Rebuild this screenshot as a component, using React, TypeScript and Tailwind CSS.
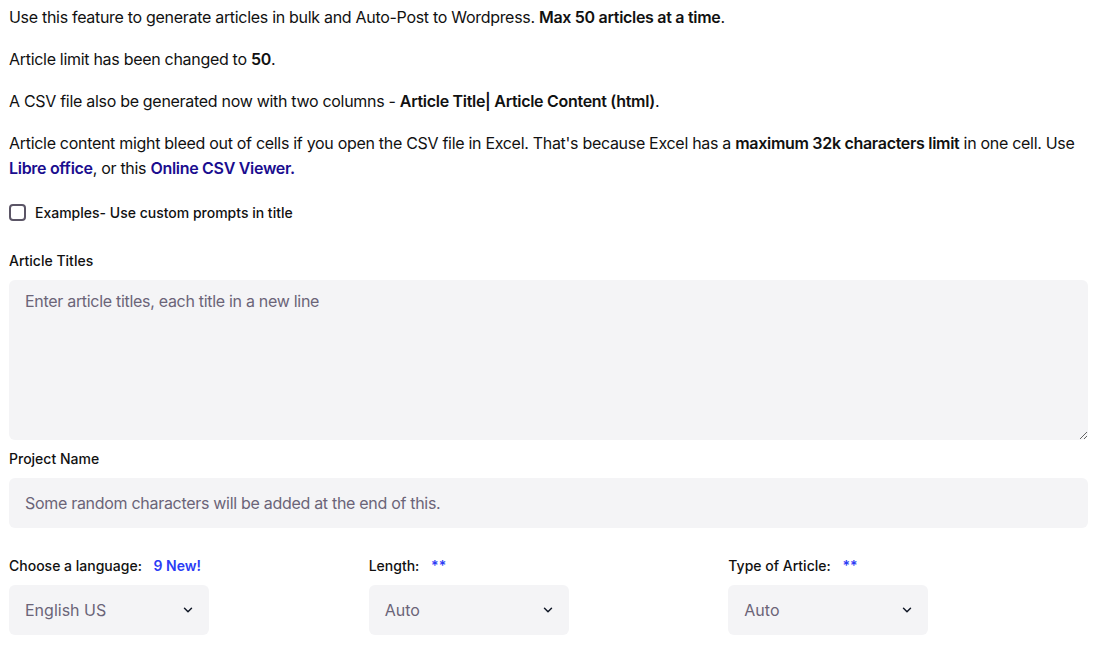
import React from "react";

const Chevron = () => (
  <svg width="14" height="14" viewBox="0 0 24 24" fill="none" stroke="#111827" strokeWidth="2.5" strokeLinecap="round" strokeLinejoin="round"><path d="M6 9l6 6 6-6" /></svg>
);

function Sel({ v }: { v: string }) {
  return (
    <div className="w-[200px] h-[50px] bg-[#f4f4f6] rounded-md flex items-center justify-between pl-4 pr-[14px] text-[16px] text-[#6b6478]">
      <span>{v}</span>
      <Chevron />
    </div>
  );
}

export default function App() {
  return (
    <div className="pl-[9px] pr-[15px] pt-[5px] text-[16px] leading-[25px] text-[#111] bg-white tracking-[-0.3px]" style={{ fontFamily: "Inter, 'Noto Sans', sans-serif" }}>
      <p className="mb-[17px]">Use this feature to generate articles in bulk and Auto-Post to Wordpress. <b className="font-semibold">Max 50 articles at a time</b>.</p>
      <p className="mb-[17px]">Article limit has been changed to <b className="font-semibold">50</b>.</p>
      <p className="mb-[17px]">A CSV file also be generated now with two columns - <b className="font-semibold">Article Title| Article Content (html)</b>.</p>
      <p className="mb-[20px]">Article content might bleed out of cells if you open the CSV file in Excel. That's because Excel has a <b className="font-semibold">maximum 32k characters limit</b> in one cell. Use <b className="font-semibold text-[#1a0d8f]">Libre office</b>, or this <b className="font-semibold text-[#1a0d8f]">Online CSV Viewer.</b></p>
      <label className="flex items-center gap-[9px] text-[14px] font-medium h-[22px] tracking-normal">
        <span className="w-[17px] h-[17px] border-2 border-[#5b5566] rounded-[4px]" />
        Examples- Use custom prompts in title
      </label>
      <div className="mt-[28px] text-[14px] font-medium leading-[20px] tracking-normal">Article Titles</div>
      <textarea className="mt-[9px] block w-full h-[160px] bg-[#f4f4f6] rounded-md px-4 py-[9px] text-[16px] placeholder-[#6b6478] outline-none" placeholder="Enter article titles, each title in a new line" />
      <div className="mt-[9px] text-[14px] font-medium leading-[20px] tracking-normal">Project Name</div>
      <div className="mt-[9px] h-[50px] bg-[#f4f4f6] rounded-md flex items-center px-4 text-[#6b6478]">Some random characters will be added at the end of this.</div>
      <div className="mt-[28px] grid grid-cols-3 tracking-normal">
        <div>
          <div className="text-[14px] font-medium leading-[20px] mb-[9px]">Choose a language: <span className="ml-2 text-[#2b3cf5] font-semibold">9 New!</span></div>
          <Sel v="English US" />
        </div>
        <div>
          <div className="text-[14px] font-medium leading-[20px] mb-[9px]">Length: <span className="ml-2 text-[#2b3cf5] font-semibold">**</span></div>
          <Sel v="Auto" />
        </div>
        <div>
          <div className="text-[14px] font-medium leading-[20px] mb-[9px]">Type of Article: <span className="ml-2 text-[#2b3cf5] font-semibold">**</span></div>
          <Sel v="Auto" />
        </div>
      </div>
    </div>
  );
}
